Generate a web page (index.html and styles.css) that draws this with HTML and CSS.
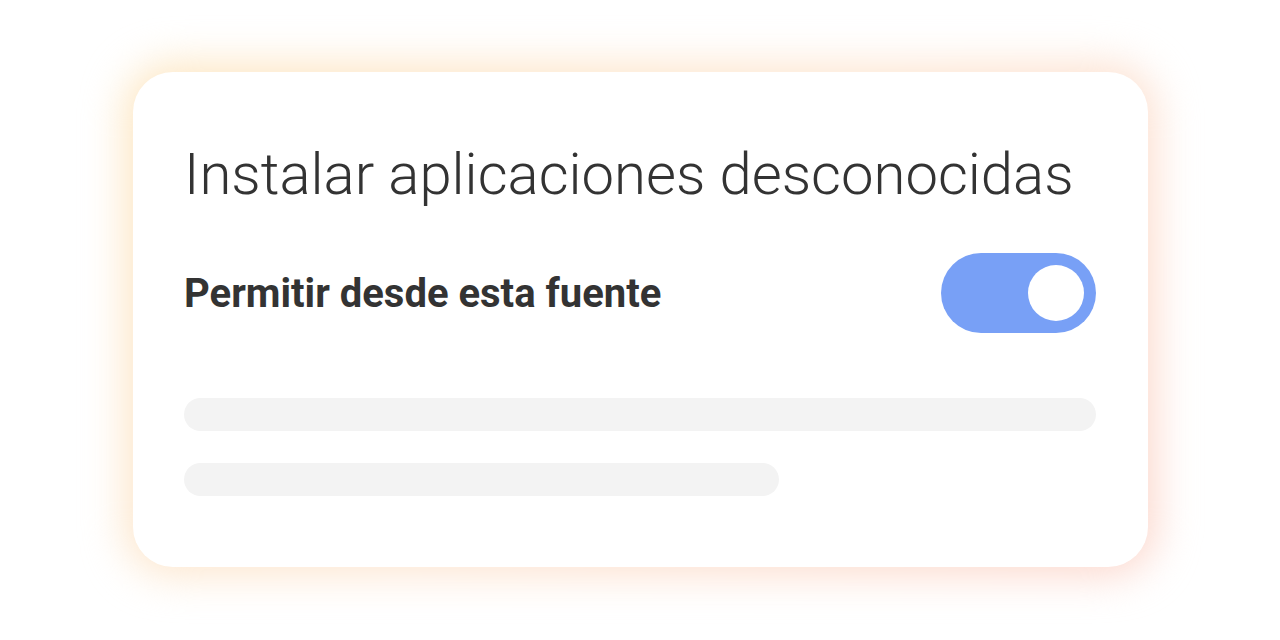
FILE: index.html
```html
<!DOCTYPE html>
<html lang="es">
<head>
<meta charset="utf-8">
<link rel="stylesheet" href="styles.css">
</head>
<body>
<main class="stage">
  <section class="card">
    <h1 class="title">Instalar aplicaciones desconocidas</h1>
    <div class="row">
      <span class="label">Permitir desde esta fuente</span>
      <span class="toggle"><span class="knob"></span></span>
    </div>
    <div class="lines">
      <div class="line line-full"></div>
      <div class="line line-short"></div>
    </div>
  </section>
</main>
</body>
</html>
```
FILE: styles.css
```css
html, body {
  margin: 0;
  padding: 0;
  background: #ffffff;
}
.stage {
  width: 1280px;
  height: 640px;
  padding: 72px 0 0 133px;
  box-sizing: border-box;
  isolation: isolate;
}
.card {
  position: relative;
  width: 1015px;
  height: 495px;
  box-sizing: border-box;
  padding: 0 52px 0 51px;
  background: #fff;
  border-radius: 40px;
  font-family: Roboto, "Noto Sans", sans-serif;
  color: #333333;
  display: flex;
  flex-direction: column;
}
.card::before {
  content: "";
  position: absolute;
  inset: -8px;
  border-radius: 48px;
  background: linear-gradient(135deg, #fde6c0 0%, #fde6d2 50%, #fcd6cc 100%);
  filter: blur(20px);
  z-index: -1;
}
.title {
  margin: 64px 0 0;
  font-weight: 300;
  font-size: 58px;
  line-height: 76px;
  letter-spacing: 0;
}
.row {
  margin-top: 41px;
  display: flex;
  align-items: center;
  justify-content: space-between;
}
.label {
  font-weight: 700;
  font-size: 40px;
}
.toggle {
  width: 155px;
  height: 80px;
  border-radius: 40px;
  background: #78a0f6;
  display: flex;
  align-items: center;
  justify-content: flex-end;
  padding-right: 12px;
  box-sizing: border-box;
}
.knob {
  width: 56px;
  height: 56px;
  border-radius: 50%;
  background: #fff;
}
.lines {
  margin-top: 65px;
  display: flex;
  flex-direction: column;
  gap: 32px;
}
.line {
  height: 33px;
  border-radius: 17px;
  background: #f3f3f3;
}
.line-short {
  width: 595px;
}
```
